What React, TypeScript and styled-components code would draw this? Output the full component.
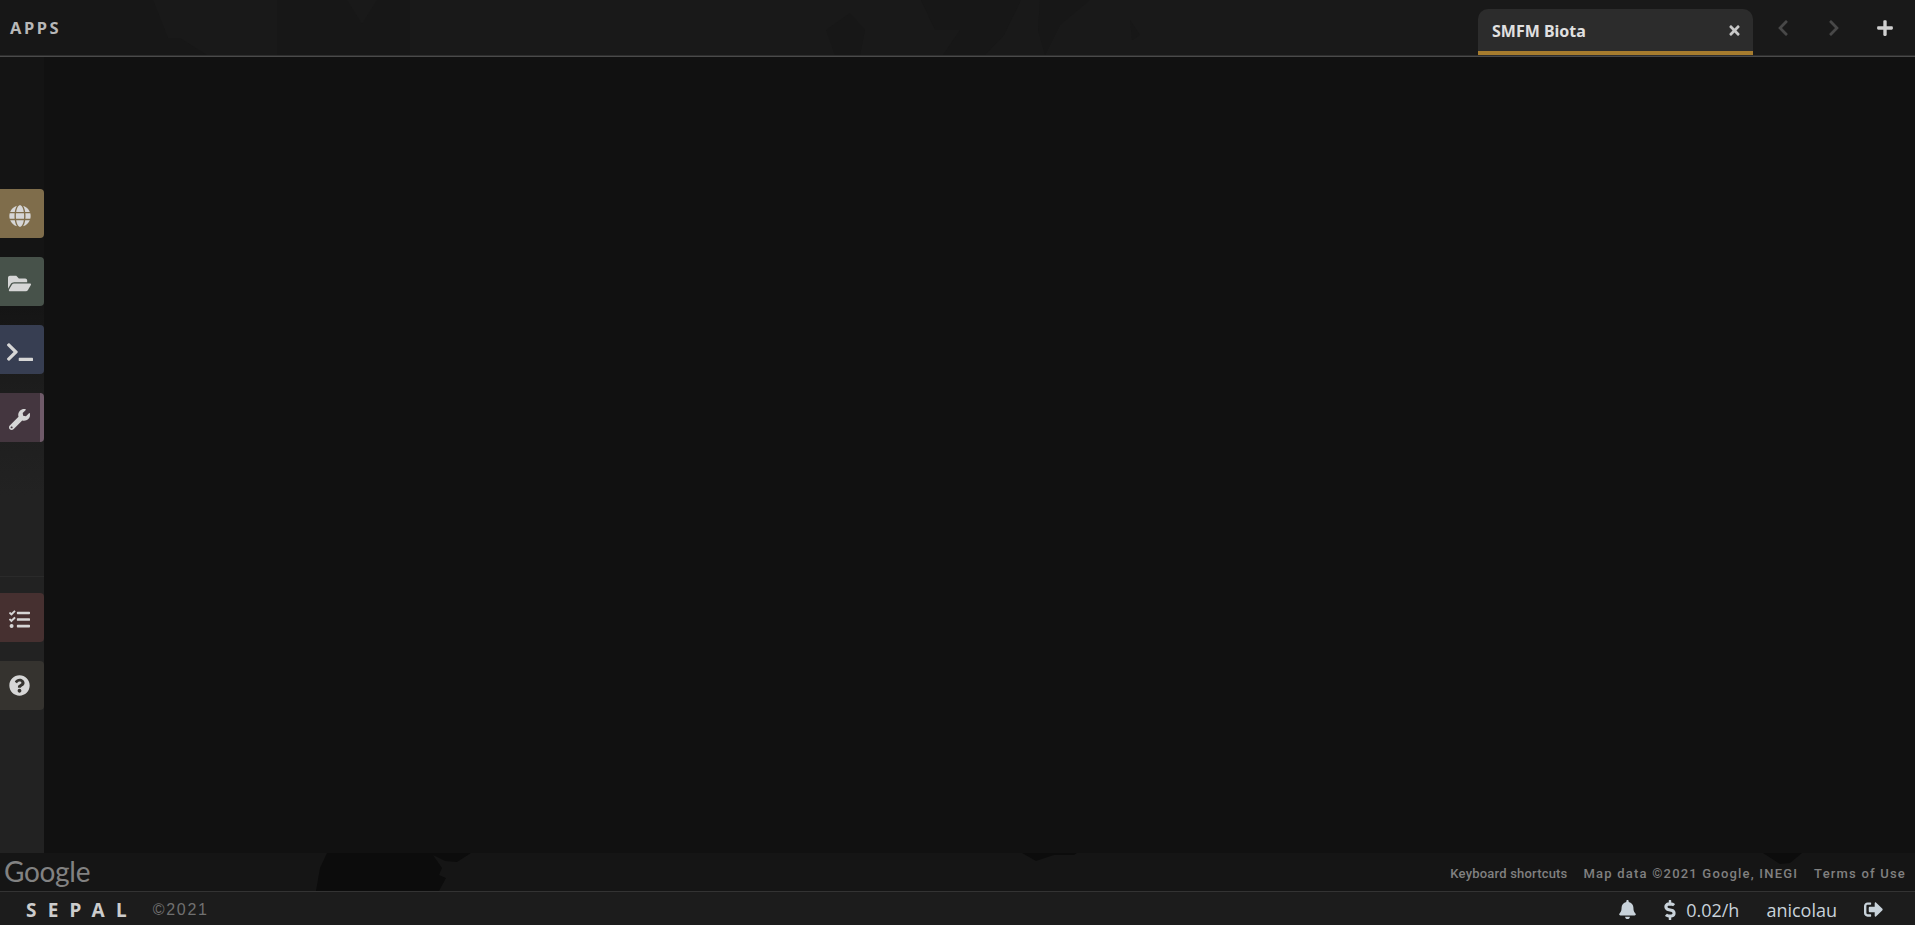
import styled, { createGlobalStyle } from 'styled-components';
import { FaGlobe, FaFolderOpen, FaTerminal, FaWrench, FaTasks, FaQuestionCircle, FaBell, FaDollarSign, FaSignOutAlt, FaTimes, FaChevronLeft, FaChevronRight, FaPlus } from 'react-icons/fa';

const GlobalStyle = createGlobalStyle`
  html, body, #root {
    margin: 0;
    height: 100%;
    background: #111;
    overflow: hidden;
  }
  body {
    font-family: "Noto Sans", "Open Sans", sans-serif;
  }
`;

const Page = styled.div`
  width: 1915px;
  height: 925px;
  overflow: hidden;
  display: flex;
  flex-direction: column;
`;

const TopBar = styled.header`
  position: relative;
  height: 55px;
  flex: none;
  background: #191919;
  display: flex;
  align-items: stretch;
  color: #bbb;
`;

const TopRule = styled.div`
  height: 1px;
  flex: none;
  background: #4a4a4a;
  border-top: 1px solid #2e2e2e;
`;

const MapShapes = styled.svg`
  position: absolute;
  inset: 0;
  width: 100%;
  height: 100%;
`;

const AppsTitle = styled.div`
  position: relative;
  flex: 1;
  padding: 20px 0 0 10px;
  font-size: 16.5px;
  line-height: 16px;
  font-weight: 700;
  letter-spacing: 2.5px;
  color: #b8b8b8;
`;

const Tab = styled.div`
  position: relative;
  width: 275px;
  margin-top: 9px;
  box-sizing: border-box;
  background: #2c2c2c;
  border-bottom: 4px solid #a67c2e;
  border-radius: 10px 10px 0 0;
  padding: 1px 11px 0 14px;
  display: flex;
  align-items: center;
  justify-content: space-between;
  font-size: 16px;
  font-weight: 700;
  color: #e0e0e0;
  svg {
    color: #c8c8c8;
  }
`;

const Nav = styled.div`
  position: relative;
  display: flex;
  margin-left: 4px;
  padding-right: 5px;
`;

const NavButton = styled.div<{ $dim?: boolean }>`
  width: 51px;
  display: flex;
  align-items: center;
  justify-content: center;
  color: ${(p) => (p.$dim ? '#484848' : '#d0d0d0')};
  font-size: 18px;
`;

const Middle = styled.main`
  flex: 1;
  display: flex;
  min-height: 0;
`;

const Sidebar = styled.nav`
  width: 44px;
  flex: none;
  background: linear-gradient(#141414 0, #141414 30%, #1d1d1d 42%, #222 55%, #222 100%);
  padding-top: 132px;
  box-sizing: border-box;
  display: flex;
  flex-direction: column;
`;

const SideGroup = styled.div`
  display: flex;
  flex-direction: column;
  gap: 19px;
`;

const SideRule = styled.div`
  height: 1px;
  background: #2a2a2a;
  margin: 134px 0 16px;
`;

const SideButton = styled.div<{ $bg: string; $accent?: string; $size: number; $drop?: number }>`
  width: 44px;
  height: 49px;
  box-sizing: border-box;
  background: ${(p) => p.$bg};
  border-radius: 0 4px 4px 0;
  border-right: 4px solid ${(p) => p.$accent ?? 'transparent'};
  color: #d6d6d6;
  font-size: ${(p) => p.$size}px;
  padding: ${(p) => p.$drop ?? 4}px 1px 0 0;
  display: flex;
  align-items: center;
  justify-content: center;
`;

const MapArea = styled.div`
  flex: 1;
  background: #111;
`;

const MapStrip = styled.div`
  position: relative;
  height: 38px;
  flex: none;
  box-sizing: border-box;
  background: #151515;
  display: flex;
  align-items: center;
  justify-content: space-between;
  padding: 0 9px 0 4px;
`;

const GoogleMark = styled.span`
  position: relative;
  font-family: Lato, sans-serif;
  font-size: 28px;
  font-weight: 400;
  letter-spacing: -0.3px;
  line-height: 30px;
  color: #828282;
  margin-top: -2px;
`;

const Attribution = styled.div`
  position: relative;
  display: flex;
  gap: 16px;
  padding-top: 2px;
  font-family: Roboto, sans-serif;
  font-weight: 500;
  font-size: 13px;
  letter-spacing: 0.2px;
  color: #808080;
`;

const Spaced = styled.span`
  letter-spacing: 1.2px;
`;

const Footer = styled.footer`
  height: 34px;
  flex: none;
  box-sizing: border-box;
  background: #1c1c1c;
  border-top: 1px solid #333;
  display: flex;
  align-items: center;
  justify-content: space-between;
  padding: 2px 32px 0 26px;
`;

const FooterLeft = styled.div`
  display: flex;
  align-items: center;
  gap: 15px;
`;

const Logo = styled.span`
  font-size: 19px;
  font-weight: 700;
  letter-spacing: 11.2px;
  color: #ccc;
`;

const Copyright = styled.span`
  font-family: "Liberation Sans", sans-serif;
  font-size: 16px;
  letter-spacing: 1.7px;
  color: #707070;
`;

const FooterRight = styled.div`
  display: flex;
  align-items: center;
  gap: 27px;
  font-family: "Open Sans", sans-serif;
  font-size: 18px;
  color: #c8d2da;
`;

const Cost = styled.span`
  display: flex;
  align-items: center;
  gap: 10px;
  svg {
    margin: 0 -4px;
  }
`;

const landTop = [
  '0,0 153,0 168,38 180,38 207,55 0,55',
  '277,0 347,0 362,24 377,0 410,0 410,55 277,55',
  '826,30 850,13 865,30 860,55 835,55',
  '921,0 1021,0 1004,35 985,55 943,55 960,30 935,30',
  '1040,0 1090,0 1060,25 1045,55 1038,30',
  '1130,20 1140,35 1132,40',
];

const landBottom = [
  '327,0 471,0 457,9 445,8 433,2 442,15 439,22 446,25 439,38 316,38 320,15',
  '1022,0 1077,0 1074,2 1054,2 1036,8',
  '1763,0 1802,0 1790,10 1780,11',
];

export default function App() {
  return (
    <Page>
      <GlobalStyle />
      <TopBar>
        <MapShapes viewBox="0 0 1915 55" preserveAspectRatio="none">
          {landTop.map((points) => (
            <polygon key={points} points={points} fill="#171717" />
          ))}
        </MapShapes>
        <AppsTitle>APPS</AppsTitle>
        <Tab>
          SMFM Biota
          <FaTimes size={15} />
        </Tab>
        <Nav>
          <NavButton $dim><FaChevronLeft /></NavButton>
          <NavButton $dim><FaChevronRight /></NavButton>
          <NavButton><FaPlus /></NavButton>
        </Nav>
      </TopBar>
      <TopRule />
      <Middle>
        <Sidebar>
          <SideGroup>
            <SideButton $bg="#7f6d4b" $size={22}><FaGlobe /></SideButton>
            <SideButton $bg="#47524a" $size={23}><FaFolderOpen /></SideButton>
            <SideButton $bg="#373e52" $size={26}><FaTerminal /></SideButton>
            <SideButton $bg="#44363f" $accent="#6f5a69" $size={21}><FaWrench /></SideButton>
          </SideGroup>
          <SideRule />
          <SideGroup>
            <SideButton $bg="#463030" $size={21}><FaTasks /></SideButton>
            <SideButton $bg="#35332f" $size={21} $drop={0}><FaQuestionCircle /></SideButton>
          </SideGroup>
        </Sidebar>
        <MapArea />
      </Middle>
      <MapStrip>
        <MapShapes viewBox="0 0 1915 38" preserveAspectRatio="none">
          {landBottom.map((points) => (
            <polygon key={points} points={points} fill="#0c0c0c" />
          ))}
        </MapShapes>
        <GoogleMark>Google</GoogleMark>
        <Attribution>
          <span>Keyboard shortcuts</span>
          <Spaced>Map data ©2021 Google, INEGI</Spaced>
          <Spaced>Terms of Use</Spaced>
        </Attribution>
      </MapStrip>
      <Footer>
        <FooterLeft>
          <Logo>SEPAL</Logo>
          <Copyright>©2021</Copyright>
        </FooterLeft>
        <FooterRight>
          <FaBell size={19} />
          <Cost><FaDollarSign size={20} />0.02/h</Cost>
          <span>anicolau</span>
          <FaSignOutAlt size={19} />
        </FooterRight>
      </Footer>
    </Page>
  );
}
